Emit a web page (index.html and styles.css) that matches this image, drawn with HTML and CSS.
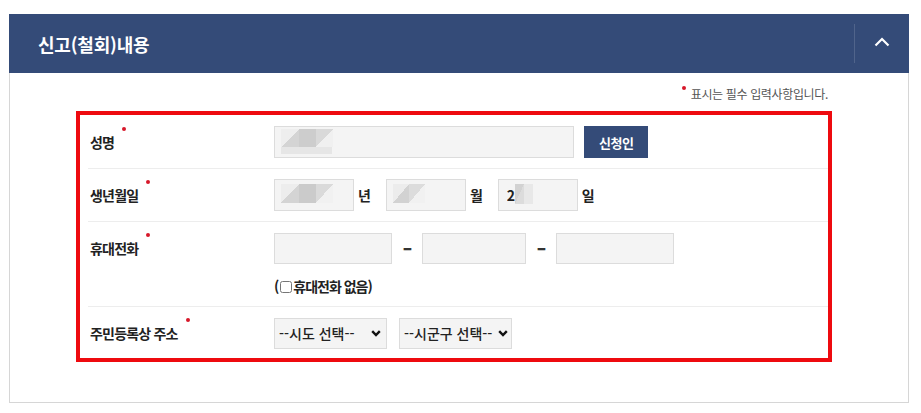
FILE: index.html
```html
<!DOCTYPE html>
<html lang="ko">
<head>
<meta charset="utf-8">
<title>신고(철회)내용</title>
<link rel="stylesheet" href="styles.css">
</head>
<body>
<section class="panel">
  <div class="panel-head">
    <h2 class="panel-title">신고(철회)내용</h2>
    <button class="toggle" type="button" aria-label="접기">
      <svg width="16" height="10" viewBox="0 0 16 10"><polyline points="1.5,8.5 8,2 14.5,8.5" fill="none" stroke="#fff" stroke-width="2.2"/></svg>
    </button>
  </div>
  <div class="panel-body">
    <p class="note"><span class="dot"></span>표시는 필수 입력사항입니다.</p>
    <div class="form-box">
      <div class="row first">
        <div class="label">성명</div>
        <div class="field">
          <div class="line">
            <input class="inp w-name mosaic-name" type="text">
            <button class="btn" type="button">신청인</button>
          </div>
        </div>
      </div>
      <div class="row">
        <div class="label">생년월일</div>
        <div class="field">
          <div class="line">
            <input class="inp w-date mosaic-small" type="text"><span class="unit">년</span>
            <input class="inp w-date mosaic-small2" type="text"><span class="unit">월</span>
            <input class="inp w-date mosaic-day" type="text" value="2"><span class="unit">일</span>
          </div>
        </div>
      </div>
      <div class="row">
        <div class="label">휴대전화</div>
        <div class="field">
          <div class="line">
            <input class="inp w-tel1" type="text"><span class="dash"><span class="dash-c">-</span></span>
            <input class="inp w-tel2" type="text"><span class="dash"><span class="dash-c">-</span></span>
            <input class="inp w-tel1" type="text">
          </div>
          <label class="nophone">(<input type="checkbox" class="chk">휴대전화 없음)</label>
        </div>
      </div>
      <div class="row last">
        <div class="label">주민등록상 주소</div>
        <div class="field">
          <div class="line">
            <select class="sel sel1"><option>--시도 선택--</option></select>
            <select class="sel sel2"><option>--시군구 선택--</option></select>
          </div>
        </div>
      </div>
    </div>
  </div>
</section>
</body>
</html>
```

FILE: styles.css
```css
* { box-sizing: border-box; }

html, body {
  margin: 0;
  background: #fff;
}

body {
  padding: 14px 12px 0 9px;
  font-family: "Noto Sans CJK KR", "Noto Sans", sans-serif;
  color: #222;
}

.panel {
  width: 900px;
  height: 389px;
  border: 1px solid #d6d6d6;
  border-top: 0;
}

.panel-head {
  display: flex;
  align-items: center;
  justify-content: space-between;
  height: 59px;
  margin: 0 -1px;
  background: #344b78;
}

.panel-title {
  margin: 0;
  padding-left: 29px;
  font-size: 18px;
  font-weight: 700;
  letter-spacing: -0.2px;
  line-height: 24px;
  color: #fff;
}

.toggle {
  display: flex;
  align-items: center;
  justify-content: center;
  width: 55px;
  height: 39px;
  padding: 0 0 3px;
  border: 0;
  border-left: 1px solid rgba(255, 255, 255, 0.14);
  background: transparent;
}

.panel-body {
  padding: 12px 76px 0 66px;
}

.note {
  margin: 0 0 8px;
  padding-right: 4px;
  text-align: right;
  font-size: 12px;
  line-height: 18px;
  letter-spacing: -0.35px;
  color: #555;
}

.note .dot {
  display: inline-block;
  width: 4px;
  height: 4px;
  margin: 1px 5px 0 0;
  border-radius: 50%;
  background: #d7182a;
  vertical-align: top;
}

.form-box {
  border: 4px solid #ee0a0f;
  padding-left: 8px;
}

.row {
  display: grid;
  grid-template-columns: 186px 1fr;
  padding: 10px 0;
  border-bottom: 1px solid #ededed;
}

.row.first { padding-top: 11px; }
.row.last { border-bottom: 0; padding-bottom: 9px; }

.label {
  display: flex;
  align-items: center;
  height: 32px;
  padding-left: 2px;
  font-size: 14px;
  font-weight: 700;
  letter-spacing: -0.8px;
  color: #222;
}

.label::after {
  content: "";
  align-self: flex-start;
  width: 4px;
  height: 4px;
  margin: 1px 0 0 8px;
  border-radius: 50%;
  background: #d7182a;
}

.line {
  display: flex;
  align-items: center;
  height: 32px;
}

.inp {
  height: 32px;
  margin: 0;
  padding: 0 8px;
  border: 1px solid #dcdcdc;
  background-color: #f4f4f4;
  background-repeat: no-repeat;
  font-family: inherit;
  font-size: 14px;
  font-weight: 700;
  color: #222;
}

.w-name { width: 300px; }
.w-date { width: 80px; }
.w-tel1 { width: 118px; height: 31px; }
.w-tel2 { width: 104px; height: 31px; }

.mosaic-name {
  background-image:
    linear-gradient(#cdcdcd, #cdcdcd),
    linear-gradient(to bottom right, #eeeeee 50%, #d4d4d4 50%),
    linear-gradient(to bottom right, #d9d9d9 50%, #f0f0f0 50%),
    linear-gradient(#e6e6e6, #e6e6e6);
  background-size: 17px 18px, 18px 18px, 17px 18px, 51px 7px;
  background-position: 24px 2px, 6px 2px, 41px 2px, 6px 20px;
}

.mosaic-small {
  background-image:
    linear-gradient(#cbcbcb, #cbcbcb),
    linear-gradient(to bottom right, #ededed 50%, #d4d4d4 50%),
    linear-gradient(to bottom right, #dadada 50%, #f1f1f1 50%);
  background-size: 17px 19px, 18px 19px, 17px 19px;
  background-position: 24px 4px, 6px 4px, 41px 4px;
}

.mosaic-small2 {
  background-image:
    linear-gradient(to bottom right, #ececec 50%, #d2d2d2 50%),
    linear-gradient(to bottom right, #dcdcdc 50%, #f1f1f1 50%);
  background-size: 16px 19px, 16px 19px;
  background-position: 6px 4px, 22px 4px;
}

.mosaic-day {
  padding-left: 8px;
  background-image:
    linear-gradient(to bottom right, #d2d2d2 50%, #dcdcdc 50%),
    linear-gradient(#e8e8e8, #e8e8e8);
  background-size: 9px 20px, 9px 20px;
  background-position: 16px 4px, 25px 4px;
}

.unit {
  margin: 0 16px 0 4px;
  font-size: 14px;
  font-weight: 700;
  letter-spacing: -1px;
}

.dash {
  display: flex;
  justify-content: center;
  width: 30px;
  font-size: 18px;
  font-weight: 900;
  color: #333;
}

.dash-c {
  display: inline-block;
  transform: scaleX(1.5);
}

.btn {
  height: 32px;
  margin-left: 10px;
  padding: 0 15px;
  border: 0;
  background: #344b78;
  color: #fff;
  font-family: inherit;
  font-size: 13px;
  font-weight: 700;
  letter-spacing: -0.5px;
}

.nophone {
  display: flex;
  align-items: center;
  margin-top: 12px;
  height: 20px;
  font-size: 14px;
  font-weight: 700;
  letter-spacing: -1px;
  color: #222;
}

.chk {
  width: 12px;
  height: 12px;
  margin: 1px 1px 0 2px;
}

.sel {
  height: 31px;
  margin: 0;
  padding: 0 0 0 4px;
  border: 1px solid #dcdcdc;
  background-color: #f4f4f4;
  background-image: url("data:image/svg+xml,%3Csvg xmlns='http://www.w3.org/2000/svg' width='10' height='7' viewBox='0 0 10 7'%3E%3Cpolyline points='1.2,1.2 5,5 8.8,1.2' fill='none' stroke='%23111' stroke-width='2.4'/%3E%3C/svg%3E");
  background-repeat: no-repeat;
  background-position: right 5px center;
  -webkit-appearance: none;
  appearance: none;
  border-radius: 0;
  font-family: inherit;
  font-size: 14px;
  font-weight: 500;
  color: #222;
}

.sel1 { width: 113px; }
.sel2 { width: 113px; margin-left: 12px; background-position: right 3px center; }
```
